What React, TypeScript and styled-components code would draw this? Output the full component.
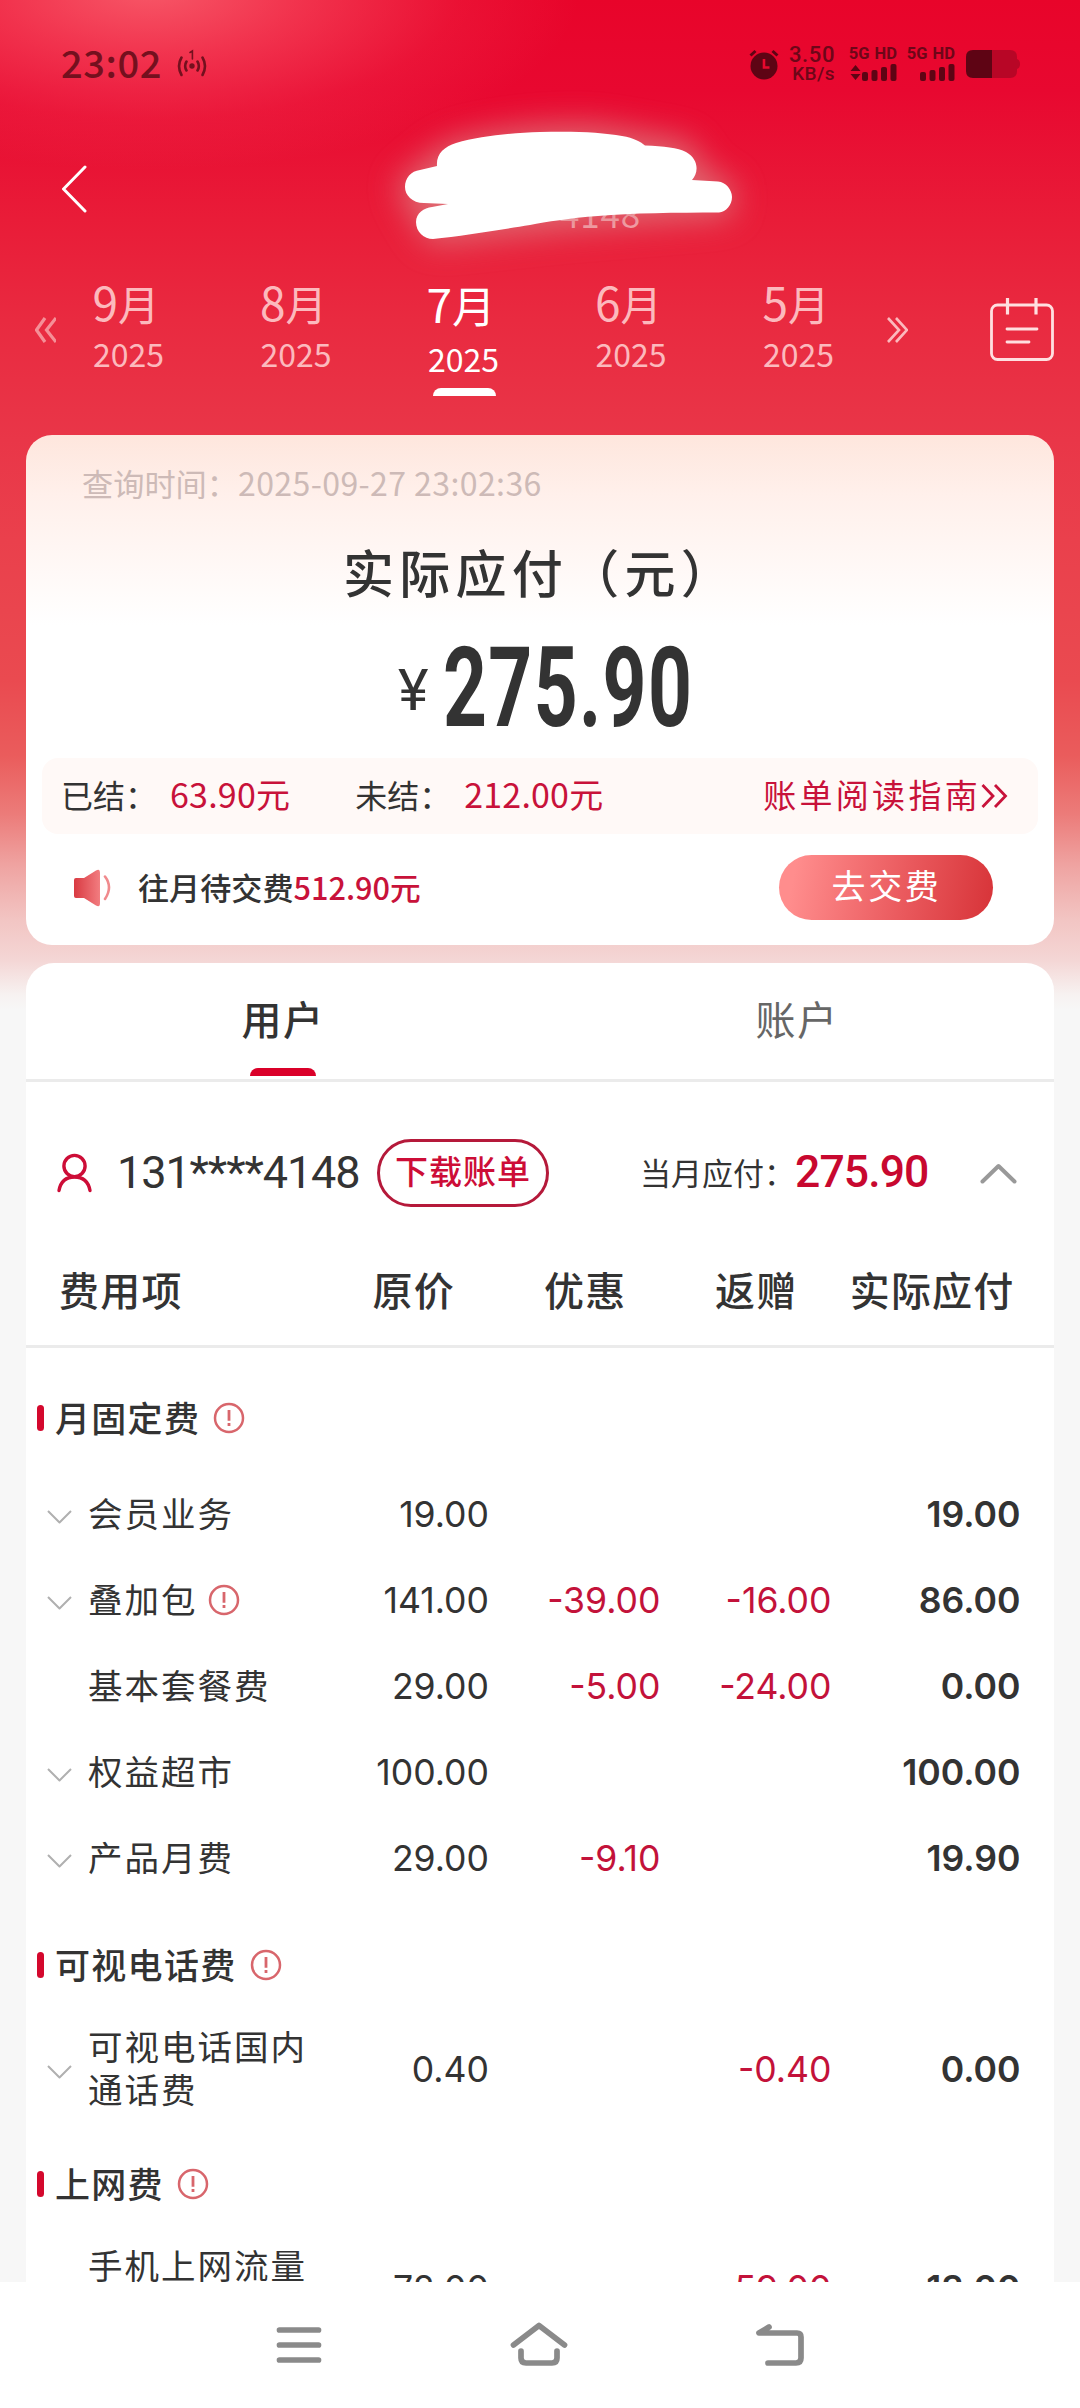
import React from "react";
import styled, { createGlobalStyle, css } from "styled-components";

const CJK = `"Noto Sans CJK SC", sans-serif`;

const GlobalStyle = createGlobalStyle`
  * { box-sizing: border-box; }
  html, body { margin: 0; padding: 0; }
  body { background: #f7f7f7; font-family: ${CJK}; color: #333; }
  svg { display: block; flex: none; }
`;

const Screen = styled.div`
  width: 1080px;
  height: 2408px;
  overflow: hidden;
  display: flex;
  flex-direction: column;
  background:
    radial-gradient(ellipse 430px 180px at 150px -10px, rgba(255, 130, 135, 0.66), rgba(255, 115, 125, 0.42) 35%, rgba(255, 110, 120, 0.12) 72%, rgba(255, 110, 120, 0) 100%),
    linear-gradient(180deg, #e8042a 0px, #e80830 90px, #e91c38 220px, #e92a40 320px, #e93648 440px, #ea404c 540px, #ea4a50 680px, #ea5c5c 755px, #ec7c7a 815px, #efa3a1 865px, #f2c5c3 920px, #f4d6d5 960px, #f7f2f1 995px, #f7f7f7 1010px);
`;

const StatusBar = styled.header`
  height: 128px;
  flex: none;
  display: flex;
  justify-content: space-between;
  align-items: center;
  padding: 0 60px 0 61px;
`;

const StatusSide = styled.div<{ $gap: number }>`
  display: flex;
  align-items: center;
  gap: ${(p) => p.$gap}px;
  height: 40px;
`;

const Clock = styled.span`
  font: 500 38px/40px ${CJK};
  letter-spacing: 0.6px;
  color: #74101e;
  margin-top: -4px;
`;

const NetSpeed = styled.div`
  display: flex;
  flex-direction: column;
  align-items: flex-end;
  width: 48px;
  margin-right: 7px;
  color: #6e0618;
  font: 500 22px/19px Roboto, sans-serif;
  letter-spacing: 0.6px;
`;

const SpeedUnit = styled.span`
  font-size: 19px;
  letter-spacing: 0.4px;
`;

const Sim = styled.div`
  display: flex;
  flex-direction: column;
  align-items: flex-end;
  gap: 3px;
  width: 47px;
  margin-right: 3px;
  color: #6e0618;
`;

const SimLabel = styled.span`
  font: 700 16.5px/14px Roboto, sans-serif;
  white-space: nowrap;
  word-spacing: 1px;
`;

const TitleBar = styled.div`
  height: 127px;
  flex: none;
  display: flex;
  align-items: center;
  padding: 0 62px 5px;
  position: relative;
`;

const HeaderNumber = styled.span`
  position: absolute;
  left: 560px;
  top: 65px;
  font: 400 35px/40px ${CJK};
  letter-spacing: 0.8px;
  color: rgba(255, 215, 220, 0.75);
`;

const ScribbleLayer = styled.svg`
  position: absolute;
  left: 340px;
  top: -48px;
`;

const MonthBar = styled.nav`
  height: 180px;
  flex: none;
  display: flex;
  align-items: flex-start;
  padding: 23px 26px 0 35px;
`;

const MonthList = styled.div`
  display: flex;
  gap: 21.5px;
  width: 816px;
  margin-right: 15px;
`;

const PageArrow = styled.span`
  padding-top: 39px;
  flex: none;
`;

const CalendarButton = styled.span`
  margin-left: auto;
  padding-top: 20px;
`;

const Month = styled.div<{ $active?: boolean }>`
  width: 146px;
  flex: none;
  display: flex;
  flex-direction: column;
  align-items: center;
  color: ${(p) => (p.$active ? "#fff" : "#fcb9bd")};
  padding-top: ${(p) => (p.$active ? 2 : 0)}px;
`;

const MonthName = styled.span<{ $active?: boolean }>`
  font: 400 ${(p) => (p.$active ? 43.5 : 41.5)}px/46px ${CJK};
  margin-left: -6px;
  b {
    font-weight: 400;
    font-size: 46px;
  }
`;

const MonthYear = styled.span<{ $active?: boolean }>`
  font: 400 32px/40px ${CJK};
  margin-top: ${(p) => (p.$active ? 10 : 7)}px;
  margin-left: -1px;
`;

const MonthMark = styled.i`
  width: 63px;
  height: 8px;
  border-radius: 8px 8px 0 0;
  background: #fff;
  margin-top: 10px;
`;

const SummaryCard = styled.section`
  height: 510px;
  flex: none;
  margin: 0 26px;
  border-radius: 26px;
  background: linear-gradient(180deg, #fee6dd 0, #fff0eb 60px, #fff 190px);
  display: flex;
  flex-direction: column;
  align-items: stretch;
  padding: 25px 16px 0;
`;

const QueryTime = styled.div`
  font: 400 31.2px/44px ${CJK};
  color: #cdbab7;
  margin-left: 40px;
`;

const QueryStamp = styled.span`
  font-size: 32px;
  letter-spacing: 0.42px;
`;

const PayTitle = styled.h1`
  margin: 36px 0 0;
  font: 500 51px/60px ${CJK};
  letter-spacing: 5.3px;
  text-align: center;
  white-space: nowrap;
`;

const Amount = styled.div`
  display: flex;
  align-items: flex-start;
  margin: 31px 0 0 356px;
  height: 126px;
`;

const Yen = styled.span`
  font: 400 58px/60px Roboto, sans-serif;
  width: 45px;
  padding-top: 28px;
  color: #333;
`;

const AmountValue = styled.strong`
  font: 700 111px/112px Roboto, sans-serif;
  letter-spacing: 2px;
  white-space: nowrap;
  width: 250px;
  transform: scaleX(0.69);
  transform-origin: left center;
`;

const SettleBar = styled.div`
  height: 76px;
  border-radius: 16px;
  background: #fff9f7;
  display: flex;
  align-items: center;
  padding: 0 30px 5px 19px;
  font: 400 32px/44px ${CJK};
  white-space: nowrap;
`;

const Money = styled.span<{ $mr?: number; $ml?: number }>`
  color: #c8123a;
  font-size: 34px;
  letter-spacing: 0.2px;
  margin-left: ${(p) => p.$ml || 0}px;
  margin-right: ${(p) => p.$mr || 0}px;
`;

const GuideLink = styled.a`
  margin-left: auto;
  display: flex;
  align-items: center;
  color: #c8123a;
  font-size: 33px;
  letter-spacing: 3.3px;
  svg { margin-top: 4px; }
`;

const NoticeRow = styled.div`
  flex: 1;
  display: flex;
  align-items: center;
  padding: 0 45px 4px 31px;
`;

const NoticeText = styled.span`
  margin: -2px 0 0 27px;
  font: 500 31.1px/44px ${CJK};
`;

const NoticeMoney = styled.span`
  color: #c8123a;
  font-size: 30.7px;
`;

const PayButton = styled.button`
  margin-left: auto;
  width: 214px;
  height: 65px;
  border: 0;
  border-radius: 33px;
  padding: 0 0 5px 1px;
  background: linear-gradient(100deg, #ff8d8d 8%, #ea5a5e 58%, #d73338 100%);
  color: #fff;
  font: 400 34px/44px ${CJK};
  letter-spacing: 2.6px;
`;

const BillPanel = styled.section`
  flex: 1;
  min-height: 0;
  overflow: hidden;
  margin: 18px 26px 0;
  border-radius: 28px 28px 0 0;
  background: #fff;
`;

const Tabs = styled.div`
  display: flex;
  height: 119px;
  border-bottom: 3px solid #ebebeb;
`;

const Tab = styled.div<{ $active?: boolean }>`
  flex: 1;
  display: flex;
  flex-direction: column;
  align-items: center;
  font: ${(p) => (p.$active ? 500 : 400)} 40px/56px ${CJK};
  letter-spacing: 1.4px;
  color: ${(p) => (p.$active ? "#333" : "#666")};
  padding: 27px 0 0;
  &::after {
    content: "";
    display: ${(p) => (p.$active ? "block" : "none")};
    width: 66px;
    height: 8px;
    margin: 22px 0 0;
    border-radius: 8px 8px 0 0;
    background: #da0029;
  }
`;

const UserRow = styled.div`
  height: 182px;
  display: flex;
  align-items: center;
  padding: 0 37px 0 31px;
  white-space: nowrap;
`;

const PhoneNumber = styled.span`
  width: 285px;
  flex: none;
  padding-left: 25px;
  font: 400 45px/50px Roboto, sans-serif;
  letter-spacing: -1.1px;
`;

const DownloadButton = styled.button`
  width: 172px;
  height: 68px;
  flex: none;
  border: 3px solid #b5193a;
  border-radius: 34px;
  background: none;
  padding: 0 0 7px;
  color: #cd0d37;
  font: 500 33px/44px ${CJK};
  letter-spacing: 1px;
  white-space: nowrap;
`;

const DueLabel = styled.span`
  margin-left: auto;
  font: 400 31px/44px ${CJK};
  padding-bottom: 2px;
`;

const DueValue = styled.span`
  font: 500 44.500px/50px Roboto, sans-serif;
  letter-spacing: -0.9px;
  color: #c8082f;
  width: 185px;
  padding-bottom: 2px;
`;

const columns = css`
  display: grid;
  grid-template-columns: 290px 173px 171.5px 171px 189px;
`;

const TableHead = styled.div`
  ${columns}
  height: 84px;
  border-bottom: 3px solid #ebebeb;
  font: 500 40px/56px ${CJK};
  letter-spacing: 1.2px;
`;

const HeadCell = styled.span<{ $pr?: number; $first?: boolean }>`
  text-align: ${(p) => (p.$first ? "left" : "right")};
  padding-left: ${(p) => (p.$first ? 33 : 0)}px;
  padding-right: ${(p) => p.$pr || 0}px;
  margin-top: -3px;
  white-space: nowrap;
`;

const SectionTitle = styled.h2<{ $first?: boolean }>`
  margin: 0;
  padding: ${(p) => (p.$first ? 48 : 42)}px 0 31px 11px;
  display: flex;
  align-items: center;
  font: 500 35px/44px ${CJK};
  letter-spacing: 1.3px;
  height: ${(p) => (p.$first ? 123 : 117)}px;
  &::before {
    content: "";
    width: 7px;
    height: 26px;
    border-radius: 4px;
    background: #d4082d;
    margin-right: 11px;
  }
  svg { margin-left: 13px; }
`;

const TitleText = styled.span`
  margin-top: -3px;
`;

const Row = styled.div<{ $tall?: boolean }>`
  ${columns}
  height: ${(p) => (p.$tall ? 102 : 86)}px;
  align-items: center;
`;

const ItemName = styled.div`
  display: flex;
  align-items: center;
  padding-left: 21px;
  font: 400 34.5px/43px ${CJK};
  letter-spacing: 2px;
  white-space: pre-line;
  svg { margin-left: 10px; }
`;

const ItemLabel = styled.span`
  margin-top: -4px;
`;

const Toggle = styled.span`
  width: 41px;
  flex: none;
  padding-top: 5px;
  svg { margin-left: 0; }
`;

const Num = styled.span<{ $red?: boolean; $strong?: boolean }>`
  text-align: right;
  font: ${(p) => (p.$strong ? 600 : 400)} 35.6px/43px Inter, sans-serif;
  color: ${(p) => (p.$red ? "#c3123a" : "#333")};
`;

const NavBar = styled.footer`
  height: 126px;
  flex: none;
  background: #fff;
  display: flex;
  justify-content: center;
  align-items: center;
  gap: 188px;
`;

const Hotspot = () => (
  <svg width="32" height="32" viewBox="0 0 32 32" fill="none" stroke="#74101e" strokeWidth="2.6" strokeLinecap="round">
    <circle cx="16" cy="18" r="2.7" fill="#74101e" stroke="none" />
    <path d="M14 4.500L16.400 3V11" strokeWidth="1.600" />
    <path d="M10.500 13.500Q7.800 18 10.500 22.500M21.500 13.500Q24.200 18 21.500 22.500M5.500 9.500Q0.500 18 5.500 27M26.500 9.500Q31.500 18 26.500 27" />
  </svg>
);

const Alarm = () => (
  <svg width="30" height="32" viewBox="0 0 30 32" fill="none">
    <circle cx="15" cy="18" r="13.500" fill="#5e0414" />
    <path d="M1.500 7.500L6.500 3M28.500 7.500L23.500 3" stroke="#5e0414" strokeWidth="3" />
    <path d="M15 11V19.500H20.500" stroke="#e8082d" strokeWidth="2.600" />
  </svg>
);

const Signal = ({ arrows }: { arrows?: boolean }) => (
  <svg width="47" height="17" viewBox="0 0 47 17" fill="#5e0414">
    {arrows && <path d="M0.500 7L5.500 1L10.500 7ZM0.500 10L5.500 16L10.500 10Z" />}
    <rect x="12" y="8" width="6" height="9" rx="2" />
    <rect x="21.500" y="6" width="6" height="11" rx="2" />
    <rect x="31" y="3" width="6" height="14" rx="2" />
    <rect x="40.500" y="0" width="6" height="17" rx="2" />
  </svg>
);

const Battery = () => (
  <svg width="54" height="28" viewBox="0 0 54 28">
    <path d="M26 0H44Q51 0 51 7V9Q54 10 54 14T51 19V21Q51 28 44 28H26Z" fill="#b80626" />
    <path d="M7 0H26V28H7Q0 28 0 21V7Q0 0 7 0Z" fill="#5e0414" />
  </svg>
);

const Back = () => (
  <svg width="26" height="50" viewBox="0 0 26 50" fill="none" stroke="#fff" strokeWidth="3" strokeLinecap="round">
    <path d="M23 3L1.500 25L23 47" />
  </svg>
);

const Scribble = () => (
  <ScribbleLayer width="460" height="200" viewBox="340 80 460 200">
    <defs>
      <filter id="glow" x="-20%" y="-60%" width="140%" height="220%">
        <feGaussianBlur stdDeviation="16" />
      </filter>
    </defs>
    <path filter="url(#glow)" fill="#dc8284" opacity="0.75" d="M437 150C450 135 540 122 600 126L690 142L704 170L735 186L732 216L560 230L430 244L412 216L396 184Z" />
    <path
      fill="#fff"
      d="M437 166C436 154 444 147 456 143C480 136 512 133 540 132C572 131 602 132 622 136C634 138 641 142 645 145.500C664 146 678 148 686 152C700 160 698 174 692 180L718 181.500C726 182 732 190 732 197C732 205 726 212 719 212.500C676 212.500 632 213 598 216C570 218 546 222 530 225C502 229.500 462 236 433 239C424 239 416 232 416 222C416 213 424 208 432 207L448 204L424 203C412 203 405 195 405 187C405 178 411 171 420 170Z"
    />
  </ScribbleLayer>
);

const Chevrons = ({ left }: { left?: boolean }) => (
  <svg width="21" height="26" viewBox="0 0 21 26" fill="none" stroke={left ? "#f58f97" : "#fcb9bd"} strokeWidth={left ? 3.2 : 2.6}>
    {left ? <path d="M10 1L1.500 13L10 25M21 1L11.500 13L21 25" /> : <path d="M1 1L12 13L1 25M9 1L20 13L9 25" />}
  </svg>
);

const Calendar = () => (
  <svg width="64" height="63" viewBox="0 0 64 63" fill="none" stroke="#ffdfe0" strokeWidth="2.800">
    <rect x="1.500" y="7" width="61" height="54.500" rx="6" />
    <path d="M17.500 0V16.500M46 0V16.500" strokeWidth="3.200" />
    <path d="M17 31H47M17 44H39" strokeLinecap="round" />
  </svg>
);

const Speaker = () => (
  <svg width="38" height="38" viewBox="0 0 38 38">
    <defs>
      <linearGradient id="spk" x1="0" x2="1">
        <stop offset="0" stopColor="#d93a42" />
        <stop offset="1" stopColor="#f27d80" />
      </linearGradient>
    </defs>
    <path d="M3 9H11L23 1.500Q27 -1 27 4V34Q27 39 23 36.500L11 29H3Q1 29 1 27V11Q1 9 3 9Z" fill="url(#spk)" />
    <path d="M32 7.500Q40 18 32 30" fill="none" stroke="#f08a8d" strokeWidth="2.600" strokeLinecap="round" />
  </svg>
);

const GuideArrows = () => (
  <svg width="27" height="24" viewBox="0 0 27 24" fill="none" stroke="#c8123a" strokeWidth="2.800">
    <path d="M1.500 1L12 12L1.500 23M14 1L24.500 12L14 23" />
  </svg>
);

const Person = () => (
  <svg width="35" height="40" viewBox="0 0 35 40" fill="none" stroke="#cd0d37" strokeWidth="3.400" strokeLinecap="round">
    <circle cx="17.500" cy="13" r="10.600" />
    <path d="M2 37.500Q4.500 24 17.500 24T33 37.500" />
  </svg>
);

const ChevronUp = () => (
  <svg width="37" height="21" viewBox="0 0 37 21" fill="none" stroke="#999" strokeWidth="4" strokeLinecap="round" strokeLinejoin="round">
    <path d="M2.500 18.500L18.500 3L34.500 18.500" />
  </svg>
);

const ChevronDown = () => (
  <svg width="25" height="14" viewBox="0 0 25 14" fill="none" stroke="#b0b0b0" strokeWidth="2" strokeLinejoin="round">
    <path d="M1 1L12.500 12.500L24 1" />
  </svg>
);

const Info = () => (
  <svg width="32" height="32" viewBox="0 0 32 32" fill="none" stroke="#d8666c" strokeWidth="2.500">
    <circle cx="16" cy="16" r="14" />
    <path d="M16 8V18.800M16 21V24" strokeWidth="2.800" />
  </svg>
);

const MenuIcon = () => (
  <svg width="46" height="46" viewBox="277 2322 46 46" stroke="#8a8a8a" strokeWidth="5.700" strokeLinecap="round">
    <path d="M280.500 2330H319.500M280.500 2345H319.500M280.500 2360H319.500" />
  </svg>
);

const HomeIcon = () => (
  <svg width="58" height="46" viewBox="511 2319 58 46" fill="none" stroke="#8a8a8a" strokeWidth="5.700" strokeLinecap="round" strokeLinejoin="round">
    <path d="M514.500 2342L540 2322.500L565.500 2342M522 2348V2355Q522 2360 527 2360H553Q558 2360 558 2355V2348" />
  </svg>
);

const ReturnIcon = () => (
  <svg width="49" height="46" viewBox="756 2319 49 46" fill="none" stroke="#8a8a8a" strokeWidth="5.700" strokeLinecap="round" strokeLinejoin="round">
    <path d="M769 2324L759 2330H797Q801 2330 801 2334V2355Q801 2360 796 2360H768" />
  </svg>
);

const months = [9, 8, 7, 6, 5];

type Fee = { name: string; open?: boolean; info?: boolean; values: string[]; tall?: boolean };

const sections: { title: string; fees: Fee[] }[] = [
  {
    title: "月固定费",
    fees: [
      { name: "会员业务", open: true, values: ["19.00", "", "", "19.00"] },
      { name: "叠加包", open: true, info: true, values: ["141.00", "-39.00", "-16.00", "86.00"] },
      { name: "基本套餐费", values: ["29.00", "-5.00", "-24.00", "0.00"] },
      { name: "权益超市", open: true, values: ["100.00", "", "", "100.00"] },
      { name: "产品月费", open: true, values: ["29.00", "-9.10", "", "19.90"] },
    ],
  },
  {
    title: "可视电话费",
    fees: [{ name: "可视电话国内\n通话费", open: true, tall: true, values: ["0.40", "", "-0.40", "0.00"] }],
  },
  {
    title: "上网费",
    fees: [{ name: "手机上网流量\n费", tall: true, values: ["72.00", "", "-59.00", "13.00"] }],
  },
];

export default function App() {
  return (
    <Screen>
      <GlobalStyle />
      <StatusBar>
        <StatusSide $gap={14}>
          <Clock>23:02</Clock>
          <Hotspot />
        </StatusSide>
        <StatusSide $gap={8}>
          <Alarm />
          <NetSpeed>
            <span>3.50</span>
            <SpeedUnit>KB/s</SpeedUnit>
          </NetSpeed>
          <Sim>
            <SimLabel>5G HD</SimLabel>
            <Signal arrows />
          </Sim>
          <Sim>
            <SimLabel>5G HD</SimLabel>
            <Signal />
          </Sim>
          <Battery />
        </StatusSide>
      </StatusBar>

      <TitleBar>
        <Back />
        <HeaderNumber>4148</HeaderNumber>
        <Scribble />
      </TitleBar>

      <MonthBar>
        <PageArrow><Chevrons left /></PageArrow>
        <MonthList>
          {months.map((m) => {
            const active = m === 7;
            return (
              <Month key={m} $active={active}>
                <MonthName $active={active}><b>{m}</b>月</MonthName>
                <MonthYear $active={active}>2025</MonthYear>
                {active && <MonthMark />}
              </Month>
            );
          })}
        </MonthList>
        <PageArrow><Chevrons /></PageArrow>
        <CalendarButton><Calendar /></CalendarButton>
      </MonthBar>

      <SummaryCard>
        <QueryTime>查询时间：<QueryStamp>2025-09-27 23:02:36</QueryStamp></QueryTime>
        <PayTitle>实际应付（元）</PayTitle>
        <Amount>
          <Yen>¥</Yen>
          <AmountValue>275.90</AmountValue>
        </Amount>
        <SettleBar>
          <span>已结：</span>
          <Money $ml={13} $mr={65}>63.90元</Money>
          <span>未结：</span>
          <Money $ml={13}>212.00元</Money>
          <GuideLink>账单阅读指南<GuideArrows /></GuideLink>
        </SettleBar>
        <NoticeRow>
          <Speaker />
          <NoticeText>往月待交费<NoticeMoney>512.90元</NoticeMoney></NoticeText>
          <PayButton>去交费</PayButton>
        </NoticeRow>
      </SummaryCard>

      <BillPanel>
        <Tabs>
          <Tab $active>用户</Tab>
          <Tab>账户</Tab>
        </Tabs>
        <UserRow>
          <Person />
          <PhoneNumber>131****4148</PhoneNumber>
          <DownloadButton>下载账单</DownloadButton>
          <DueLabel>当月应付：</DueLabel>
          <DueValue>275.90</DueValue>
          <ChevronUp />
        </UserRow>
        <TableHead>
          <HeadCell $first>费用项</HeadCell>
          <HeadCell $pr={34}>原价</HeadCell>
          <HeadCell $pr={34}>优惠</HeadCell>
          <HeadCell $pr={34}>返赠</HeadCell>
          <HeadCell $pr={6}>实际应付</HeadCell>
        </TableHead>
        {sections.map((s, i) => (
          <React.Fragment key={s.title}>
            <SectionTitle $first={i === 0}>
              <TitleText>{s.title}</TitleText>
              <Info />
            </SectionTitle>
            {s.fees.map((f) => (
              <Row key={f.name} $tall={f.tall}>
                <ItemName>
                  <Toggle>{f.open && <ChevronDown />}</Toggle>
                  <ItemLabel>{f.name}</ItemLabel>
                  {f.info && <Info />}
                </ItemName>
                {f.values.map((v, k) => (
                  <Num key={k} $red={k === 1 || k === 2} $strong={k === 3}>{v}</Num>
                ))}
              </Row>
            ))}
          </React.Fragment>
        ))}
      </BillPanel>

      <NavBar>
        <MenuIcon />
        <HomeIcon />
        <ReturnIcon />
      </NavBar>
    </Screen>
  );
}
